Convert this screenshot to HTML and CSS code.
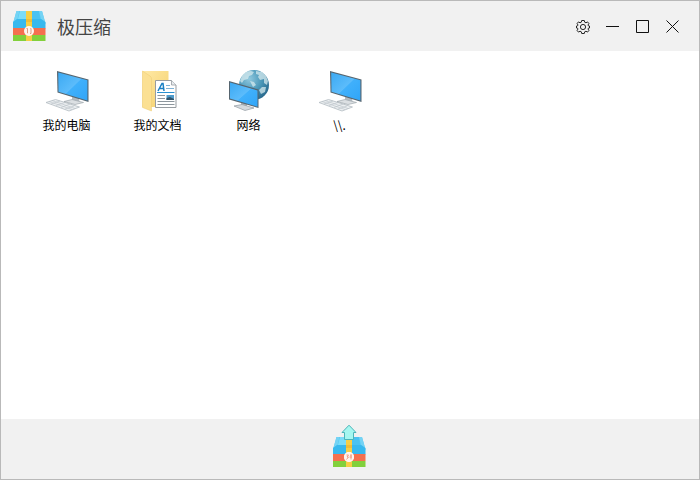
FILE: index.html
```html
<!DOCTYPE html>
<html lang="zh-CN">
<head>
  <meta charset="UTF-8" />
  <meta name="viewport" content="width=device-width, initial-scale=1.0"/>
  <title>极压缩</title>
  <link rel="stylesheet" href="styles.css">
</head>
<body>

<!-- shared icon shapes -->
<svg class="defs" width="0" height="0" aria-hidden="true">
  <defs>
    <linearGradient id="screen" x1="0" y1="0" x2="1" y2="1">
      <stop offset="0" stop-color="#3ba9f3"/>
      <stop offset=".5" stop-color="#5cbcfb"/>
      <stop offset=".52" stop-color="#40b0fb"/>
      <stop offset="1" stop-color="#30a5f8"/>
    </linearGradient>
    <linearGradient id="folder" x1="0" y1="0" x2="1" y2="1">
      <stop offset="0" stop-color="#ffe9a6"/>
      <stop offset="1" stop-color="#f4d06c"/>
    </linearGradient>
    <radialGradient id="globe" cx=".35" cy=".3" r=".75">
      <stop offset="0" stop-color="#8fc8de"/>
      <stop offset=".55" stop-color="#4a97b8"/>
      <stop offset="1" stop-color="#28688c"/>
    </radialGradient>
    <symbol id="computer" viewBox="0 0 48 48">
      <path d="M3 35.500L12.500 32.500L36.500 40L26 44Z" fill="#eceff1" stroke="#b3bbc1" stroke-width=".8"/>
      <path d="M6 34.500L29 42.500M9 33.500L32 41.500M8 37L17 34M13 38.500L22 35.500M18 40.500L27 37M22 42L31 39" stroke="#b9c1c7" stroke-width=".6" fill="none"/>
      <path d="M29 29L36 31L36.500 35L29 34Z" fill="#b4bbc1"/>
      <path d="M21 34.500L29 32.500L40.500 35.500L32 37.500Z" fill="#dce0e3" stroke="#9fa7ad" stroke-width=".7"/>
      <path d="M14 4L45.500 12.500V35L14.500 25.500Z" fill="#56656f"/>
      <path d="M15.200 5.500L44.400 13.300V33.500L15.500 24.700Z" fill="url(#screen)"/>
    </symbol>
    <symbol id="chest" viewBox="0 0 34 32">
      <path d="M4.500 1H30L33.500 14H1Z" fill="#55c8f3"/>
      <path d="M8 1H15V9H6Z" fill="#7adcf9"/>
      <path d="M20 1H27L28 9H20Z" fill="#4ac2f1"/>
      <path d="M4.500 1L1 13L5.500 9L7.500 1ZM30 1L33.500 13L29 9L27 1Z" fill="#74d3f4"/>
      <path d="M1 12L5 9H29L33.500 12V18.500H1Z" fill="#38b9ee"/>
      <path d="M1 18H33.500V25H1Z" fill="#f5704f"/>
      <path d="M1 25H33.500V31H1Z" fill="#82d03c"/>
      <path d="M14 1H20V31H14Z" fill="#f6cf46"/>
      <path d="M14 9H20V12H14Z" fill="#efbd38"/>
      <circle cx="17" cy="21" r="5" fill="#fff5ef"/>
      <path d="M15.500 18.500V23H16M15.500 18.500H14.500M18.500 18.500H19V23.500H18" stroke="#dd9276" stroke-width=".9" fill="none"/>
    </symbol>
  </defs>
</svg>

<div class="window">
  <header class="titlebar">
    <svg class="logo" aria-hidden="true"><use href="#chest"/></svg>
    <h1>极压缩</h1>
    <div class="controls">
      <button type="button" aria-label="设置">
        <svg viewBox="0 0 14 14" aria-hidden="true">
          <g stroke-width=".9">
            <path d="M5.700 .5H8.300L8.700 2.200L10 2.800L11.500 1.900L12.900 3.500L12 5L12.300 5.700L13.500 6V8L12.300 8.300L12 9L12.900 10.500L11.500 12.100L10 11.200L8.700 11.800L8.300 13.500H5.700L5.300 11.800L4 11.200L2.500 12.100L1.100 10.500L2 9L1.700 8.300L.5 8V6L1.700 5.700L2 5L1.100 3.500L2.500 1.900L4 2.800L5.300 2.200Z"/>
            <circle cx="7" cy="7" r="2.600"/>
          </g>
        </svg>
      </button>
      <button type="button" aria-label="最小化">
        <svg viewBox="0 0 14 14" aria-hidden="true"><path d="M0 6.500H13"/></svg>
      </button>
      <button type="button" aria-label="最大化">
        <svg viewBox="0 0 14 14" aria-hidden="true"><path d="M.5 .5H12.500V12.500H.5Z"/></svg>
      </button>
      <button type="button" aria-label="关闭">
        <svg viewBox="0 0 14 14" aria-hidden="true"><path d="M.5 .5L12.500 12.500M12.500 .5L.5 12.500"/></svg>
      </button>
    </div>
  </header>

  <main class="places">
    <a class="place" href="#computer">
      <svg aria-hidden="true"><use href="#computer"/></svg>
      <span>我的电脑</span>
    </a>
    <a class="place" href="#documents">
      <svg viewBox="0 0 48 48" aria-hidden="true">
        <path d="M8.500 4H34.500V40H8.500Z" fill="url(#folder)"/>
        <path d="M8.500 4L16 9Q17.500 10 17.500 12V44L8.500 40.500Z" fill="#fbe093" stroke="#eccb70" stroke-width=".5"/>
        <path d="M21.500 13.500H37.500L42 18V40.500H21.500Z" fill="#fff" stroke="#979ca1"/>
        <path d="M37.500 13.500V18H42" fill="#e8ecef" stroke="#979ca1" stroke-width=".8"/>
        <path d="M24 24L28 16.500H29L30 24M26 21.500H29.500" fill="none" stroke="#187fc4" stroke-width="1.500"/>
        <path d="M32 18.500H36M32 21.500H40" stroke="#7fb2d6"/>
        <path d="M23 25.500H40.500" stroke="#2a91d2"/>
        <path d="M23.500 28.500H31M23.500 31.500H31M23.500 34.500H40.500M23.500 37.500H40.500" stroke="#8d969d"/>
        <path d="M32.500 28H40V33H32.500Z" fill="#4f9bcb"/>
        <path d="M32.500 31L36 30L40 32V33H32.500Z" fill="#31536a"/>
      </svg>
      <span>我的文档</span>
    </a>
    <a class="place" href="#network">
      <svg viewBox="0 0 48 48" aria-hidden="true">
        <circle cx="29" cy="18" r="15" fill="url(#globe)"/>
        <path d="M17 9Q20 4 26 4L29 5L27 8L24 9L23 12L19 13L17 16L15 14ZM31 4L37 5L41 9L43 14L42 18L39 16L39 12L35 13L33 10L34 8L31 7ZM37 20L41 20L40 25L36 27L34 23ZM25 14L29 15L31 18L28 20Z" fill="#d5e9ee" opacity=".75"/>
        <path d="M16 35L22 37V41H16Z" fill="#a9b1b7"/>
        <path d="M9 39L17 37.500L29 41L20 43.500Z" fill="#d5dade" stroke="#929ba2" stroke-width=".7"/>
        <path d="M4 14L33.500 22.500V41L4 32.500Z" fill="#56656f"/>
        <path d="M5 15.500L32.500 23.500V39.700L5 31.600Z" fill="url(#screen)"/>
      </svg>
      <span>网络</span>
    </a>
    <a class="place" href="#share">
      <svg aria-hidden="true"><use href="#computer"/></svg>
      <span>\\.</span>
    </a>
  </main>

  <footer class="bottombar">
    <button type="button" aria-label="解压">
      <svg viewBox="0 0 34 44" aria-hidden="true">
        <use href="#chest" x="0" y="12" width="34" height="32"/>
        <circle cx="17" cy="33" r="5" fill="#fff5ef"/>
        <path d="M14.500 31H16.500L15 33H16.500L14.500 35.500M18 31H20M17.500 33H20M19 31V35.500" stroke="#ee8c6c" stroke-width=".8" fill="none"/>
        <path d="M17 1.200L24 8.500H21.500V15.500H12.500V8.500H10Z" fill="#a5f7f0" stroke="#4cb5b9"/>
      </svg>
    </button>
  </footer>
</div>

</body>
</html>
```

FILE: styles.css
```css
* {
  box-sizing: border-box;
}

body {
  margin: 0;
  font-family: "Noto Sans CJK SC", sans-serif;
  background: #fff;
}

button {
  padding: 0;
  border: none;
  background: none;
  cursor: pointer;
}

.defs {
  position: absolute;
}

.window {
  display: flex;
  flex-direction: column;
  min-height: 100vh;
  border: 1px solid #b9b9b9;
}

.titlebar {
  display: flex;
  align-items: center;
  height: 50px;
  padding: 0 11px;
  background: #f1f1f1;
}

.logo {
  width: 34px;
  height: 32px;
}

.titlebar h1 {
  margin: 0 0 0 11px;
  font-size: 18px;
  font-weight: normal;
  line-height: 24px;
  color: #444;
}

.controls {
  display: flex;
  margin-left: auto;
  padding-top: 2px;
}

.controls button {
  display: flex;
  align-items: center;
  justify-content: center;
  width: 30px;
  height: 30px;
}

.controls svg {
  width: 14px;
  height: 14px;
  fill: none;
  stroke: #111;
}

.controls button:hover {
  background: #ddd;
}

.places {
  flex: 1;
  display: flex;
  flex-wrap: wrap;
  align-content: flex-start;
  padding: 16px 20px;
}

.place {
  display: flex;
  flex-direction: column;
  align-items: center;
  width: 91px;
  font-size: 12px;
  line-height: 20px;
  color: #000;
  text-decoration: none;
}

.place svg {
  width: 48px;
  height: 48px;
}

.bottombar {
  display: flex;
  align-items: flex-start;
  justify-content: center;
  height: 60px;
  padding: 5px 2px 0 0;
  background: #f1f1f1;
}

.bottombar svg {
  display: block;
  width: 34px;
  height: 44px;
}
```
